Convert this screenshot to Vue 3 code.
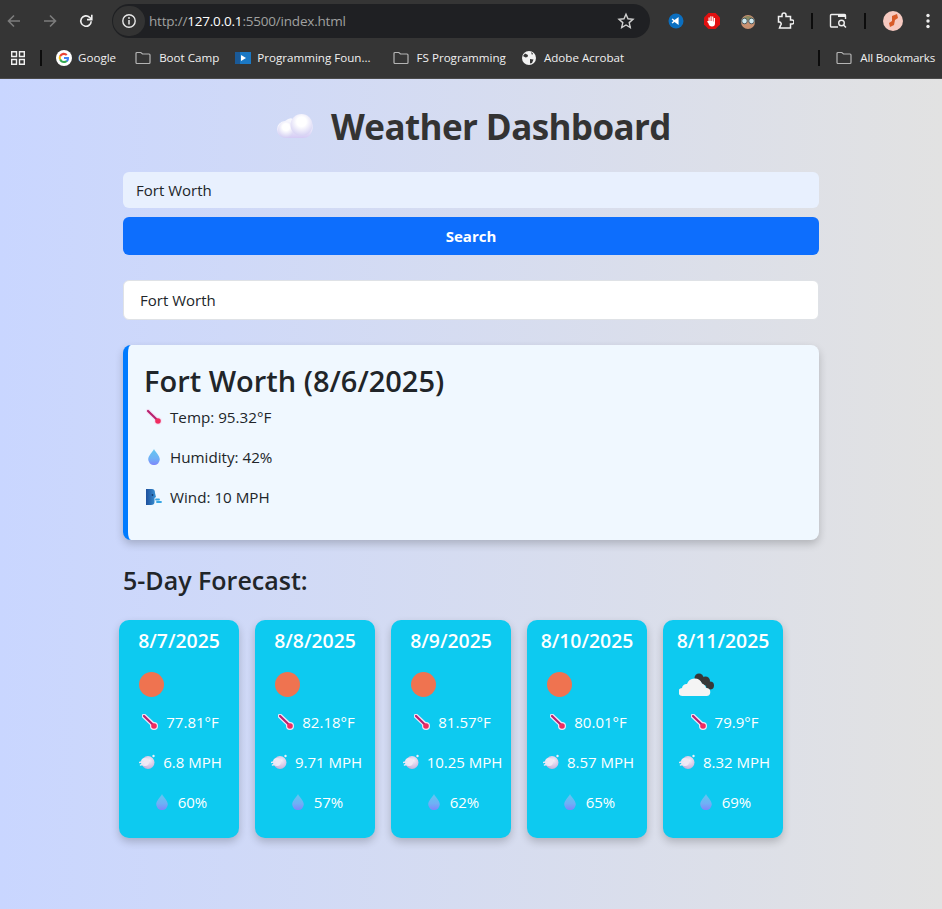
<script setup>
const bookmarks = [
  { icon: "google", label: "Google" },
  { icon: "folder", label: "Boot Camp" },
  { icon: "play", label: "Programming Foun..." },
  { icon: "folder", label: "FS Programming" },
  { icon: "globe", label: "Adobe Acrobat" },
];

const current = [
  { icon: "thermo", text: "Temp: 95.32°F" },
  { icon: "drop", text: "Humidity: 42%" },
  { icon: "face", text: "Wind: 10 MPH" },
];

const forecast = [
  { date: "8/7/2025", sky: "sun", temp: "77.81°F", wind: "6.8 MPH", hum: "60%" },
  { date: "8/8/2025", sky: "sun", temp: "82.18°F", wind: "9.71 MPH", hum: "57%" },
  { date: "8/9/2025", sky: "sun", temp: "81.57°F", wind: "10.25 MPH", hum: "62%" },
  { date: "8/10/2025", sky: "sun", temp: "80.01°F", wind: "8.57 MPH", hum: "65%" },
  { date: "8/11/2025", sky: "cloud", temp: "79.9°F", wind: "8.32 MPH", hum: "69%" },
];
</script>

<template>
  <div class="page">
    <svg width="0" height="0" class="defs">
      <defs>
        <linearGradient id="dropFill" x1="0" y1="0" x2="0" y2="1">
          <stop offset="0" stop-color="#62c8f0" />
          <stop offset="0.6" stop-color="#6fb0f6" />
          <stop offset="1" stop-color="#7f86fb" />
        </linearGradient>
        <radialGradient id="gustFill" cx="0.6" cy="0.35" r="0.8">
          <stop offset="0" stop-color="#f4eff8" />
          <stop offset="1" stop-color="#b9a4d6" />
        </radialGradient>
        <linearGradient id="faceFill" x1="0" y1="0" x2="1" y2="0">
          <stop offset="0" stop-color="#1d4f9c" />
          <stop offset="1" stop-color="#3a94d6" />
        </linearGradient>
        <symbol id="thermo" viewBox="0 0 16 16">
          <path d="M2 2 L11 10.500" stroke="#f2e6f6" stroke-width="4.600" stroke-linecap="round" />
          <circle cx="12" cy="12" r="4" fill="#f2e6f6" />
          <path d="M2 2 L11 10.700" stroke="#b8206e" stroke-width="2.200" stroke-linecap="round" />
          <circle cx="12" cy="12" r="2.800" fill="#f02c60" />
        </symbol>
        <symbol id="drop" viewBox="0 0 16 16">
          <path d="M8 0 C9.200 3 13.800 6.500 13.800 10.300 A5.800 5.800 0 0 1 2.200 10.300 C2.200 6.500 6.800 3 8 0 Z" fill="url(#dropFill)" />
        </symbol>
        <symbol id="face" viewBox="0 0 16 16">
          <path d="M0 0 H6 Q9 0 9 4 L10 8 L8.500 9 V13 Q8.500 16 5 16 H0 Z" fill="url(#faceFill)" />
          <circle cx="6.500" cy="6" r="0.900" fill="#123a70" />
          <path d="M10 10.500 h3 M11 13 h4" stroke="#37a6e4" stroke-width="1.800" stroke-linecap="round" />
        </symbol>
        <symbol id="gust" viewBox="0 0 16 16">
          <circle cx="9" cy="8.500" r="6.500" fill="url(#gustFill)" />
          <circle cx="6" cy="8" r="4" fill="#efe9f5" />
          <path d="M0.500 8.500 L4 7.500 M1.500 11 L5 10" stroke="#e6e6f4" stroke-width="1.500" stroke-linecap="round" />
          <circle cx="14.500" cy="2" r="1.200" fill="#eef0fa" />
        </symbol>
      </defs>
    </svg>

    <header class="chrome">
      <div class="toolbar">
        <svg class="nav" viewBox="0 0 16 16"><path d="M14 8H2.500M8 2.500 2.500 8 8 13.500" fill="none" stroke="#7c7c7c" stroke-width="1.600" /></svg>
        <svg class="nav" viewBox="0 0 16 16"><path d="M2 8h11.500M8 2.500 13.500 8 8 13.500" fill="none" stroke="#7c7c7c" stroke-width="1.600" /></svg>
        <svg class="nav" viewBox="0 0 16 16"><path d="M13.200 8.200A5.200 5.200 0 1 1 11.600 4.300L13.400 6" fill="none" stroke="#f0f0f0" stroke-width="1.600" /><path d="M13.800 1.800V6.600H9" fill="none" stroke="#f0f0f0" stroke-width="1.600" /></svg>
        <div class="omnibox">
          <span class="site-info">
            <svg width="16" height="16" viewBox="0 0 16 16"><circle cx="8" cy="8" r="6.200" fill="none" stroke="#e8e8e8" stroke-width="1.400" /><path d="M8 7v4.400" stroke="#e8e8e8" stroke-width="1.500" /><circle cx="8" cy="5" r="0.900" fill="#e8e8e8" /></svg>
          </span>
          <span class="url">http://<b>127.0.0.1</b>:5500/index.html</span>
          <svg class="star" width="18" height="18" viewBox="0 0 18 18"><path d="M9 2.200l2 4.600 5 .5-3.800 3.300 1.100 4.900L9 13l-4.300 2.500 1.100-4.900L2 7.300l5-.5z" fill="none" stroke="#d0d0d0" stroke-width="1.400" /></svg>
        </div>
        <div class="actions">
          <svg class="vs" width="18" height="18" viewBox="0 0 18 18"><circle cx="9" cy="9" r="7.500" fill="#0b6fc0" /><path d="M11.600 5v8L7.500 9.900 5.600 11.400 4.600 10.800 6.300 9 4.600 7.200l1-.6L7.500 8.100z" fill="#fff" /></svg>
          <svg class="stop" width="18" height="18" viewBox="0 0 18 18"><path d="M5.500 1h7L17 5.500v7L12.500 17h-7L1 12.500v-7z" fill="#e01010" /><path d="M5.500 9V5.500h1.200V9h.6V4.300h1.200V9h.6V4.500h1.200V9.500h.5V6h1.200v5.500q0 3-3 3t-3.500-3L4 9.500l1-.5z" fill="#fff" /></svg>
          <svg class="glasses" width="18" height="18" viewBox="0 0 18 18"><circle cx="9" cy="10" r="7" fill="#c89070" /><path d="M2.500 8Q9 0 15.500 8z" fill="#8a8a60" /><circle cx="5.500" cy="9" r="2.800" fill="#cfeaf0" stroke="#4a5a60" /><circle cx="12.500" cy="9" r="2.800" fill="#cfeaf0" stroke="#4a5a60" /></svg>
          <svg class="puzzle" width="18" height="18" viewBox="0 0 18 18"><path d="M2.500 4.500H6V3a2 2 0 0 1 4 0v1.500h4.500V8H16a2 2 0 0 1 0 4h-1.500v4H3.500l1-2.500a2 2 0 0 0-1-3.500h-1z" fill="none" stroke="#f2f2f2" stroke-width="1.500" /></svg>
          <i class="rule first"></i>
          <svg class="tabs" width="18" height="18" viewBox="0 0 18 18"><path d="M9 15H2.500a1 1 0 0 1-1-1V3.500a1 1 0 0 1 1-1h13a1 1 0 0 1 1 1V7" fill="none" stroke="#eee" stroke-width="1.400" /><path d="M9 2.500h7.500V5H9z" fill="#eee" /><circle cx="12.500" cy="11" r="2.800" fill="none" stroke="#eee" stroke-width="1.400" /><path d="M14.500 13l2.500 2.500" stroke="#eee" stroke-width="1.500" /></svg>
          <i class="rule"></i>
          <svg class="avatar" width="20" height="20" viewBox="0 0 20 20"><circle cx="10" cy="10" r="10" fill="#f6c9c0" /><path d="M9 5l5-2 1 4-3 2-1 5-4 2-1-4 3-2z" fill="#d85a28" /></svg>
          <svg class="dots" width="4" height="16" viewBox="0 0 4 16"><circle cx="2" cy="2.500" r="1.700" fill="#eee" /><circle cx="2" cy="8" r="1.700" fill="#eee" /><circle cx="2" cy="13.500" r="1.700" fill="#eee" /></svg>
        </div>
      </div>
      <nav class="bookmarks">
        <svg class="apps" width="14" height="14" viewBox="0 0 14 14"><path d="M.7.700h4.800v4.800H.7zM8.500.700h4.800v4.800H8.500zM.7 8.500h4.800v4.800H.7zM8.500 8.500h4.800v4.800H8.500z" fill="none" stroke="#f0f0f0" stroke-width="1.400" /></svg>
        <i class="rule bm-rule"></i>
        <a v-for="b in bookmarks" :key="b.label" class="bm" :class="b.icon">
          <svg v-if="b.icon === 'google'" width="16" height="16" viewBox="0 0 16 16"><circle cx="8" cy="8" r="8" fill="#fff" /><path d="M13 8.200c0-.4 0-.7-.1-1.100H8v2h2.800a2.400 2.400 0 0 1-1 1.600l1.600 1.300c1-.9 1.600-2.200 1.600-3.800z" fill="#4285f4" /><path d="M8 13c1.400 0 2.500-.5 3.400-1.300l-1.600-1.300c-.5.300-1 .5-1.800.5a3.100 3.100 0 0 1-3-2.200L3.300 10A5 5 0 0 0 8 13z" fill="#34a853" /><path d="M5 8.700a3 3 0 0 1 0-1.900L3.300 5.500a5 5 0 0 0 0 4.500z" fill="#fbbc05" /><path d="M8 5c.8 0 1.500.3 2 .8l1.500-1.500A5 5 0 0 0 3.300 5.500L5 6.800A3.100 3.100 0 0 1 8 5z" fill="#ea4335" /></svg>
          <svg v-else-if="b.icon === 'folder'" width="16" height="16" viewBox="0 0 16 16"><path d="M1 3.500a1 1 0 0 1 1-1h3.800L7.500 4H14a1 1 0 0 1 1 1v7.500a1 1 0 0 1-1 1H2a1 1 0 0 1-1-1z" fill="none" stroke="#b4b4b4" stroke-width="1.200" /></svg>
          <svg v-else-if="b.icon === 'play'" width="16" height="16" viewBox="0 0 16 16"><rect y="2" width="16" height="12" fill="#1b78c4" /><rect y="2" width="5" height="12" fill="#1a5a98" /><path d="M6 5l5 3-5 3z" fill="#fff" /></svg>
          <svg v-else width="16" height="16" viewBox="0 0 16 16"><circle cx="7" cy="8" r="7" fill="#f2f2f2" /><path d="M3 3.500l3 1.500-.5 2-2 .5L1 6zM8 9l3.500.5L10 13l-2 .5zM9 2l2 1.500L10 5z" fill="#353535" /></svg>
          <span>{{ b.label }}</span>
        </a>
        <i class="rule end-rule"></i>
        <a class="bm folder all">
          <svg width="16" height="16" viewBox="0 0 16 16"><path d="M1 3.500a1 1 0 0 1 1-1h3.800L7.500 4H14a1 1 0 0 1 1 1v7.500a1 1 0 0 1-1 1H2a1 1 0 0 1-1-1z" fill="none" stroke="#b4b4b4" stroke-width="1.200" /></svg>
          <span>All Bookmarks</span>
        </a>
      </nav>
    </header>

    <main class="dash">
      <h1 class="title">
        <svg class="title-cloud" width="38" height="26" viewBox="0 0 38 26">
          <defs>
            <linearGradient id="puffBase" x1="0" y1="0" x2="0" y2="1">
              <stop offset="0.45" stop-color="#f6f6fd" />
              <stop offset="1" stop-color="#d4caf4" />
            </linearGradient>
            <radialGradient id="puff" cx="0.5" cy="0.35" r="0.62">
              <stop offset="0.35" stop-color="#ffffff" />
              <stop offset="1" stop-color="#d8d4f4" />
            </radialGradient>
          </defs>
          <path d="M9 25 A8.500 8.500 0 0 1 8 8 Q13 4 16 6 A11.500 11.500 0 1 1 32 23 Q30 25 26 25 Z" fill="url(#puffBase)" />
          <circle cx="9" cy="16.500" r="8" fill="url(#puff)" />
          <circle cx="24.500" cy="12" r="11" fill="url(#puff)" />
        </svg>
        Weather Dashboard
      </h1>

      <form class="search" @submit.prevent>
        <input class="city-input" value="Fort Worth" />
        <button class="search-btn" type="submit">Search</button>
      </form>

      <div class="history">Fort Worth</div>

      <section class="today">
        <h2>Fort Worth (8/6/2025)</h2>
        <p v-for="row in current" :key="row.text">
          <svg class="emoji" width="16" height="16"><use :href="'#' + row.icon" /></svg>{{ row.text }}
        </p>
      </section>

      <h3 class="five">5-Day Forecast:</h3>

      <div class="cards">
        <article v-for="day in forecast" :key="day.date" class="card">
          <h4>{{ day.date }}</h4>
          <div class="sky">
            <span v-if="day.sky === 'sun'" class="sun"></span>
            <svg v-else class="clouds" width="36" height="24" viewBox="0 0 36 24">
              <circle cx="20" cy="5" r="4.500" fill="#383838" />
              <circle cx="26.500" cy="8" r="4.500" fill="#383838" />
              <circle cx="31" cy="12.500" r="4" fill="#383838" />
              <path d="M4 23a4 4 0 0 1-1-8 4.500 4.500 0 0 1 5-4A8 8 0 0 1 23 10.500a6 6 0 0 1 4 4.500 4 4 0 0 1 .5 8z" fill="#f4f4f4" />
            </svg>
          </div>
          <p><svg class="emoji" width="16" height="16"><use href="#thermo" /></svg>{{ day.temp }}</p>
          <p><svg class="emoji" width="16" height="16"><use href="#gust" /></svg>{{ day.wind }}</p>
          <p><svg class="emoji" width="16" height="16"><use href="#drop" /></svg>{{ day.hum }}</p>
        </article>
      </div>
    </main>
  </div>
</template>

<style>
html,
body {
  margin: 0;
  height: 100%;
}
</style>

<style scoped>
.page {
  height: 909px;
  overflow: hidden;
  background: linear-gradient(to right, #c9d6ff, #e2e2e2);
  font-family: "Open Sans", "Noto Sans", sans-serif;
  color: #212529;
}
.defs {
  position: absolute;
}
.chrome {
  background: #353535;
  height: 79px;
  box-sizing: border-box;
  border-bottom: 1px solid #4a4a4a;
}
.toolbar {
  height: 42px;
  display: flex;
  align-items: center;
  padding-left: 6px;
}
.nav {
  width: 16px;
  height: 16px;
  margin-right: 20px;
}
.omnibox {
  width: 538px;
  height: 34px;
  margin-left: -2px;
  background: #1f2023;
  border-radius: 17px;
  display: flex;
  align-items: center;
  color: #a0a0a0;
}
.site-info {
  width: 32px;
  height: 30px;
  margin-left: 1px;
  border-radius: 15px;
  background: #333;
  display: flex;
  align-items: center;
  justify-content: center;
}
.url {
  margin-left: 4px;
  font-size: 13.5px;
  letter-spacing: -0.2px;
}
.url b {
  color: #fff;
  font-weight: 400;
}
.star {
  margin-left: auto;
  margin-right: 15px;
}
.actions {
  display: flex;
  align-items: center;
  margin-left: 17px;
}
.vs { margin-right: 18px; }
.stop { margin-right: 18px; }
.glasses { margin-right: 19px; }
.puzzle { margin-right: 17px; }
.tabs { margin-right: 17px; margin-left: 16px; }
.avatar { margin-left: 17px; margin-right: 23px; }
.rule {
  display: block;
  width: 2px;
  height: 16px;
  background: #0c0c0c;
}
.bookmarks {
  height: 31px;
  display: flex;
  align-items: center;
  padding-left: 11px;
  font-size: 11.6px;
  color: #f0f0f0;
}
.bm-rule {
  margin: 0 14px 0 15px;
}
.bm {
  display: flex;
  align-items: center;
  gap: 6px;
  margin-right: 16px;
  white-space: nowrap;
}
.bm.google {
  margin-right: 19px;
}
.bm.folder {
  gap: 8px;
}
.bm.play {
  margin-right: 22px;
}
.end-rule {
  margin-left: auto;
  margin-right: 16px;
}
.bm.all {
  margin-right: 7px;
  letter-spacing: -0.2px;
}
.dash {
  width: 696px;
  margin: 0 auto;
}
.title {
  margin: 22px 0 21px;
  padding-left: 6px;
  height: 50px;
  display: flex;
  align-items: center;
  justify-content: center;
  gap: 16px;
  font-size: 35px;
  letter-spacing: -0.6px;
  font-weight: 700;
  color: #333;
}
.title-cloud {
  flex: none;
}
.search {
  display: flex;
  flex-direction: column;
  gap: 9px;
}
.city-input {
  height: 36px;
  box-sizing: border-box;
  border: 0;
  border-radius: 6px;
  background: #e8f0fe;
  padding: 0 13px;
  font: 15px "Open Sans", sans-serif;
  color: #212529;
}
.search-btn {
  height: 38px;
  border: 0;
  border-radius: 6px;
  background: #0d6efd;
  color: #fff;
  font: 700 15px "Open Sans", sans-serif;
}
.history {
  margin-top: 25px;
  height: 40px;
  box-sizing: border-box;
  display: flex;
  align-items: center;
  padding: 0 16px;
  background: #fff;
  border: 1px solid #dfe2e6;
  border-radius: 6px;
  font-size: 15px;
}
.today {
  margin-top: 25px;
  height: 195px;
  box-sizing: border-box;
  padding: 19px 16px 0;
  background: #f0f8ff;
  border-left: 5px solid #007bff;
  border-radius: 8px;
  box-shadow: 0 4px 8px rgba(0, 0, 0, 0.2);
}
.today h2 {
  margin: 0;
  font-size: 29px;
  line-height: 33px;
  font-weight: 600;
}
.today p {
  margin: 0;
  height: 40px;
  display: flex;
  align-items: center;
  font-size: 15.2px;
}
.today .emoji {
  margin-left: 2px;
}
.emoji {
  flex: none;
  margin-right: 8px;
}
.five {
  margin: 24px 0 24px;
  font-size: 25px;
  line-height: 32px;
  font-weight: 600;
}
.cards {
  display: flex;
  gap: 16px;
  margin-left: -4px;
}
.card {
  width: 120px;
  height: 218px;
  box-sizing: border-box;
  padding: 8px;
  background: #0dcaf0;
  border-radius: 10px;
  color: #fff;
  box-shadow: 0 4px 8px rgba(0, 0, 0, 0.2);
}
.card h4 {
  margin: 0;
  font-size: 19.4px;
  font-weight: 600;
  line-height: 26px;
  text-align: center;
}
.sky {
  height: 48px;
  box-sizing: border-box;
  padding: 13px 0 0 12px;
  display: flex;
  align-items: center;
}
.sun {
  width: 25px;
  height: 25px;
  border-radius: 50%;
  background: #ef7350;
}
.clouds {
  margin-left: -4px;
}
.card p {
  margin: 0;
  height: 40px;
  padding-left: 3px;
  display: flex;
  align-items: center;
  justify-content: center;
  font-size: 15px;
  white-space: nowrap;
}
</style>
